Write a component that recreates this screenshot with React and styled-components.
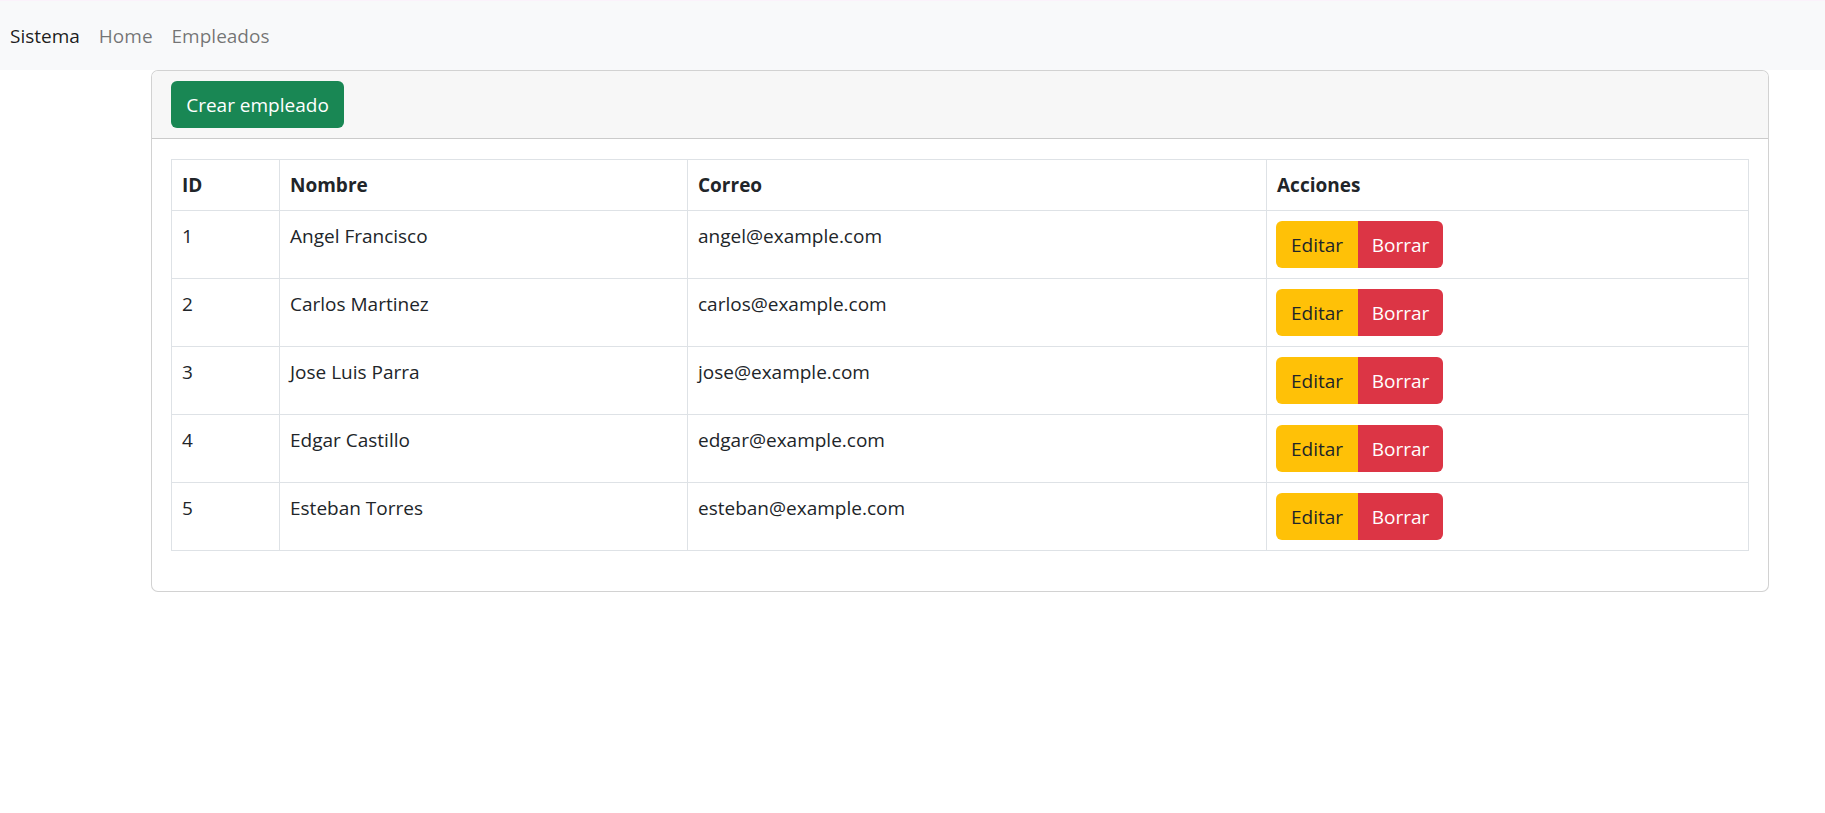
import React from "react";
import styled, { createGlobalStyle } from "styled-components";

const GlobalStyle = createGlobalStyle`
  html, body {
    margin: 0;
    padding: 0;
    background: #fff;
  }
  body {
    font-family: "Open Sans", "Noto Sans", sans-serif;
    font-size: 20px;
    line-height: 30px;
    color: #212529;
  }
  * {
    box-sizing: border-box;
  }
`;

const Navbar = styled.nav`
  height: 70px;
  background: #f8f9fa;
  border-top: 1px solid #fbf2fb;
  display: flex;
  align-items: center;
  padding: 0 10px;
  gap: 19px;
`;

const Brand = styled.a`
  color: rgba(0, 0, 0, 0.9);
  text-decoration: none;
  font-size: 19px;
`;

const NavLink = styled.a`
  color: rgba(0, 0, 0, 0.55);
  text-decoration: none;
  font-size: 19px;
`;

const Card = styled.div`
  margin-left: 151px;
  width: 1618px;
  border: 1px solid rgba(0, 0, 0, 0.175);
  border-radius: 7px;
  background: #fff;
  overflow: hidden;
`;

const CardHeader = styled.div`
  background: #f7f7f7;
  border-bottom: 1px solid rgba(0, 0, 0, 0.175);
  padding: 10px 19px;
`;

const CardBody = styled.div`
  padding: 20px 19px;
`;

const Button = styled.button`
  font-family: inherit;
  font-size: 19px;
  line-height: 30px;
  height: 47px;
  padding: 0 15px;
  border: none;
  border-radius: 6px;
  cursor: pointer;
  color: ${(p) => (p.$variant === "warning" ? "#212529" : "#fff")};
  background: ${(p) =>
    p.$variant === "success"
      ? "#198754"
      : p.$variant === "warning"
      ? "#ffc107"
      : "#dc3545"};
`;

const CreateButton = styled(Button)`
  width: 173px;
  padding: 0;
`;

const Group = styled.div`
  display: inline-flex;
  margin-left: -1px;
  ${Button} {
    border-radius: 0;
    padding: 0;
  }
  ${Button}:first-child {
    border-radius: 6px 0 0 6px;
    width: 82px;
  }
  ${Button}:last-child {
    border-radius: 0 6px 6px 0;
    width: 85px;
  }
`;

const Table = styled.table`
  width: 1577px;
  border-collapse: collapse;
  table-layout: fixed;
  margin-bottom: 20px;
  font-size: 19px;
`;

const Th = styled.th`
  text-align: left;
  font-weight: 700;
  padding: 10px;
  border: 1px solid #dee2e6;
  width: ${(p) => p.$w}px;
  height: 51px;
  vertical-align: top;
`;

const Td = styled.td`
  padding: 10px;
  border: 1px solid #dee2e6;
  vertical-align: top;
  height: 68px;
`;

const empleados = [
  { id: 1, nombre: "Angel Francisco", correo: "angel@example.com" },
  { id: 2, nombre: "Carlos Martinez", correo: "carlos@example.com" },
  { id: 3, nombre: "Jose Luis Parra", correo: "jose@example.com" },
  { id: 4, nombre: "Edgar Castillo", correo: "edgar@example.com" },
  { id: 5, nombre: "Esteban Torres", correo: "esteban@example.com" },
];

const App = () => {
  return (
    <>
      <GlobalStyle />
      <Navbar>
        <Brand href="#">Sistema</Brand>
        <NavLink href="#">Home</NavLink>
        <NavLink href="#">Empleados</NavLink>
      </Navbar>
      <Card>
        <CardHeader>
          <CreateButton $variant="success">Crear empleado</CreateButton>
        </CardHeader>
        <CardBody>
          <Table>
            <thead>
              <tr>
                <Th $w={108}>ID</Th>
                <Th $w={408}>Nombre</Th>
                <Th $w={579}>Correo</Th>
                <Th $w={482}>Acciones</Th>
              </tr>
            </thead>
            <tbody>
              {empleados.map((item) => (
                <tr key={item.id}>
                  <Td>{item.id}</Td>
                  <Td>{item.nombre}</Td>
                  <Td>{item.correo}</Td>
                  <Td>
                    <Group>
                      <Button $variant="warning">Editar</Button>
                      <Button $variant="danger">Borrar</Button>
                    </Group>
                  </Td>
                </tr>
              ))}
            </tbody>
          </Table>
        </CardBody>
      </Card>
    </>
  );
};

export default App;
